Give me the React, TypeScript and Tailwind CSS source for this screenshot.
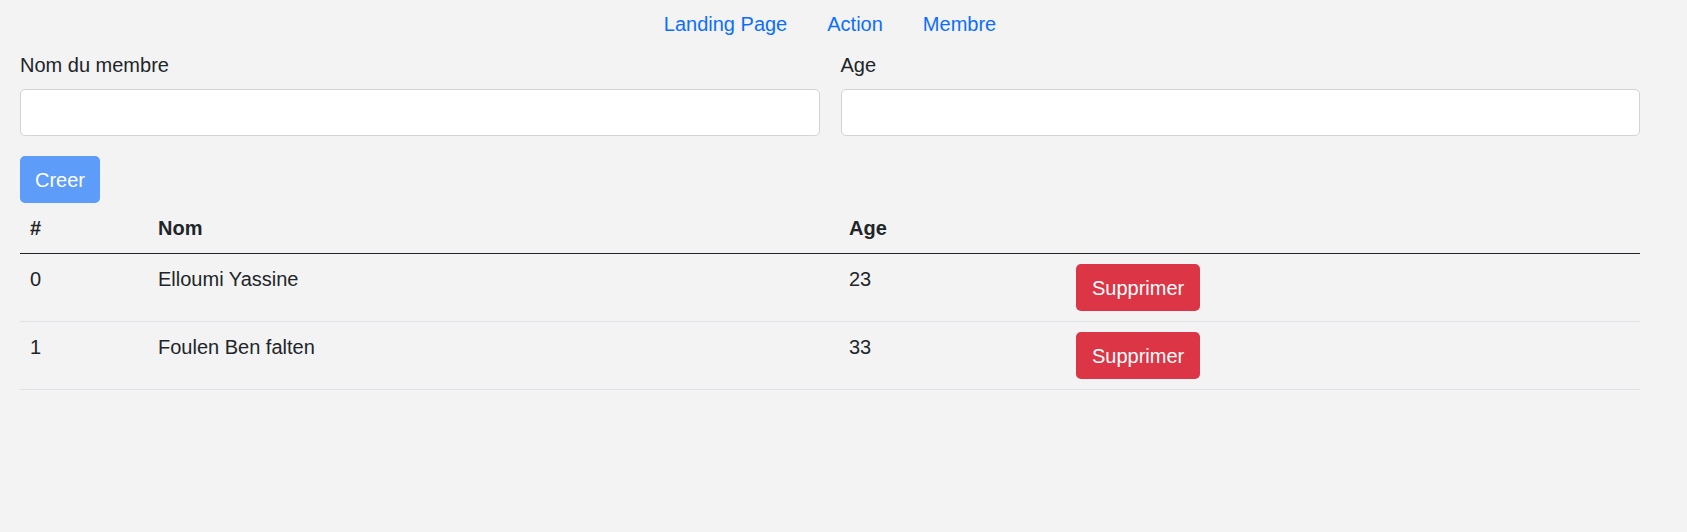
import React from 'react';

const membres = [
  {id: 0, nom: 'Elloumi Yassine', age: 23},
  {id: 1, nom: 'Foulen Ben falten', age: 33},
];

export default function App() {
  return (
    <div
      className="min-h-screen bg-[#f3f3f3] text-[20px] leading-[30px] text-[#212529]"
      style={{fontFamily: '"Liberation Sans", Arial, sans-serif'}}
    >
      <div className="w-[1640px] pl-[20px]">
        <nav className="flex justify-center h-[50px] pt-[9px]">
          <a href="#" className="px-[20px] text-[#0d6efd]">
            Landing Page
          </a>
          <a href="#" className="px-[20px] text-[#0d6efd]">
            Action
          </a>
          <a href="#" className="px-[20px] text-[#0d6efd]">
            Membre
          </a>
        </nav>

        <div className="grid grid-cols-2 gap-[21px]">
          <div>
            <label className="block mb-[9px]">Nom du membre</label>
            <input
              type="text"
              className="block w-full h-[47px] bg-white border border-[#ced4da] rounded-[5px] px-[15px] outline-none"
            />
          </div>
          <div>
            <label className="block mb-[9px]">Age</label>
            <input
              type="text"
              className="block w-full h-[47px] bg-white border border-[#ced4da] rounded-[5px] px-[15px] outline-none"
            />
          </div>
        </div>

        <button
          type="button"
          className="mt-[20px] h-[47px] px-[15px] rounded-[5px] bg-[#5d9cf9] text-white"
        >
          Creer
        </button>

        <table className="w-full table-fixed border-collapse">
          <thead>
            <tr className="border-b border-[#212529]">
              <th className="w-[128px] p-[10px] text-left font-bold">#</th>
              <th className="w-[691px] p-[10px] text-left font-bold">Nom</th>
              <th className="w-[227px] p-[10px] text-left font-bold">Age</th>
              <th className="p-[10px]"></th>
            </tr>
          </thead>
          <tbody>
            {membres.map((m) => (
              <tr key={m.id} className="border-b border-[#dee2e6]">
                <td className="p-[10px] align-top">{m.id}</td>
                <td className="p-[10px] align-top">{m.nom}</td>
                <td className="p-[10px] align-top">{m.age}</td>
                <td className="p-[10px] align-top">
                  <button
                    type="button"
                    className="block h-[47px] px-[16px] rounded-[5px] bg-[#dc3545] text-white"
                  >
                    Supprimer
                  </button>
                </td>
              </tr>
            ))}
          </tbody>
        </table>
      </div>
    </div>
  );
}
